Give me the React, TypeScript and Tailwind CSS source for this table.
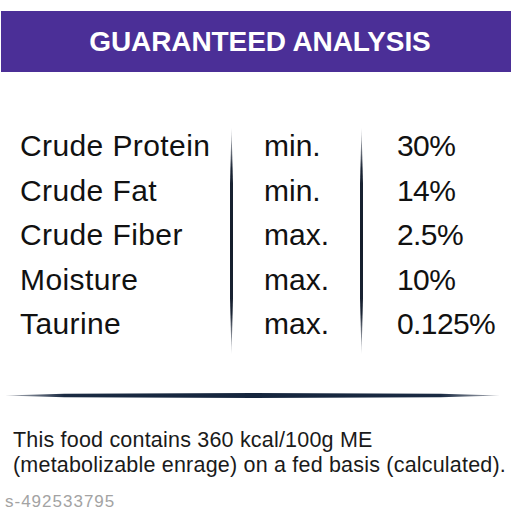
const rows = [
  { name: 'Crude Protein', kind: 'min.', value: '30%' },
  { name: 'Crude Fat', kind: 'min.', value: '14%' },
  { name: 'Crude Fiber', kind: 'max.', value: '2.5%' },
  { name: 'Moisture', kind: 'max.', value: '10%' },
  { name: 'Taurine', kind: 'max.', value: '0.125%' },
];

function VLine() {
  return (
    <div className="mt-[3px] h-[228px] w-[3px] shrink-0 bg-[linear-gradient(to_bottom,rgba(60,70,90,0.15),#1a2434_18%,#141d2b_50%,#1a2434_82%,rgba(60,70,90,0.15))] [clip-path:polygon(50%_0,100%_25%,100%_75%,50%_100%,0_75%,0_25%)]" />
  );
}

export default function App() {
  return (
    <div className="w-[512px] h-[519px] bg-white overflow-hidden font-['Liberation_Sans',Arial,sans-serif] pt-[11px]">
      <div className="mx-[1px] h-[61px] bg-[#4b2f97] flex items-center justify-center pl-[8px]">
        <h1 className="text-white font-bold text-[28px] leading-none tracking-[-0.1px]">
          GUARANTEED ANALYSIS
        </h1>
      </div>

      <div className="mt-[52px] flex text-[30px] leading-[44.5px] text-[#111]">
        <div className="w-[230px] pl-[20px] flex flex-col tracking-[0.4px]">
          {rows.map((r) => (
            <div key={r.name} className="whitespace-nowrap">{r.name}</div>
          ))}
        </div>
        <VLine />
        <div className="w-[127px] pl-[31px] flex flex-col">
          {rows.map((r) => (
            <div key={r.name}>{r.kind}</div>
          ))}
        </div>
        <VLine />
        <div className="pl-[34px] flex flex-col">
          {rows.map((r) => (
            <div key={r.name} className="tracking-[-0.6px]">{r.value}</div>
          ))}
        </div>
      </div>

      <div className="mt-[38px] ml-[5px] w-[495px] h-[5px] bg-[linear-gradient(to_right,rgba(40,50,70,0.35),#1a2a42_12%,#15253d_50%,#1a2a42_88%,rgba(40,50,70,0.35))] [clip-path:polygon(0_50%,12%_15%,50%_0,88%_15%,100%_50%,88%_85%,50%_100%,12%_85%)]" />

      <p className="mt-[30px] pl-[13px] text-[21.5px] leading-[25px] tracking-[0.2px] text-[#1a1a1a] whitespace-nowrap">
        This food contains 360 kcal/100g ME
        <br />
        (metabolizable enrage) on a fed basis (calculated).
      </p>

      <div className="mt-[14px] pl-[5px] text-[17px] leading-[20px] tracking-[1px] text-[#a3a3a3]">
        s-492533795
      </div>
    </div>
  );
}
